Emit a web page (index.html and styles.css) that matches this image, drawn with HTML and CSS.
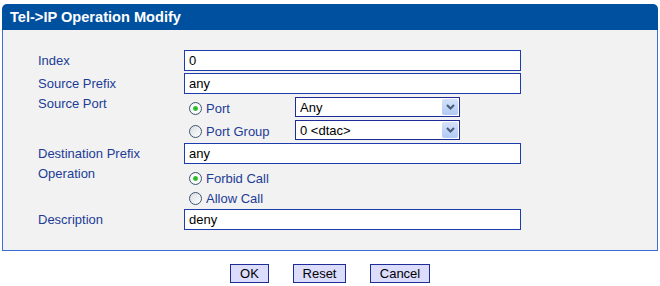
FILE: index.html
```html
<!DOCTYPE html>
<html lang="en">
<head>
    <meta charset="UTF-8">
    <title>Tel->IP Operation Modify</title>
    <link rel="stylesheet" href="styles.css">
</head>
<body>

    <div class="box">
        <div class="title">Tel-&gt;IP Operation Modify</div>
        <div class="panel">
            <div class="form">
                <div class="lbl">Index</div>
                <div class="val"><input class="txt" type="text" value="0"></div>

                <div class="lbl">Source Prefix</div>
                <div class="val"><input class="txt" type="text" value="any"></div>

                <div class="lbl top">Source Port</div>
                <div class="val sub">
                    <label class="opt"><input type="radio" name="port" checked> Port</label>
                    <div class="sel">
                        <select><option>Any</option></select>
                        <span class="arrow"><svg width="9" height="6" viewBox="0 0 9 6"><path d="M1 1 L4.5 4.5 L8 1" fill="none" stroke="#4a5a78" stroke-width="2"/></svg></span>
                    </div>
                    <label class="opt"><input type="radio" name="port"> Port Group</label>
                    <div class="sel">
                        <select><option>0 &lt;dtac&gt;</option></select>
                        <span class="arrow"><svg width="9" height="6" viewBox="0 0 9 6"><path d="M1 1 L4.5 4.5 L8 1" fill="none" stroke="#4a5a78" stroke-width="2"/></svg></span>
                    </div>
                </div>

                <div class="lbl">Destination Prefix</div>
                <div class="val"><input class="txt" type="text" value="any"></div>

                <div class="lbl top">Operation</div>
                <div class="val ops">
                    <label class="opt"><input type="radio" name="op" checked> Forbid Call</label>
                    <label class="opt"><input type="radio" name="op"> Allow Call</label>
                </div>

                <div class="lbl">Description</div>
                <div class="val"><input class="txt" type="text" value="deny"></div>
            </div>
        </div>

        <div class="actions">
            <button class="btn ok">OK</button>
            <button class="btn reset">Reset</button>
            <button class="btn cancel">Cancel</button>
        </div>
    </div>

</body>
</html>
```

FILE: styles.css
```css
body {
    font-family: Arial, "Liberation Sans", sans-serif;
    background-color: #fff;
    margin: 0;
}

.box {
    margin: 4px 2px 0 2px;
}

.title {
    background-color: #0050a0;
    color: #fff;
    font-size: 14.6px;
    font-weight: bold;
    height: 26px;
    line-height: 26px;
    padding-left: 8px;
    border-radius: 5px 5px 0 0;
}

.panel {
    background-color: #f2f2f2;
    border: 1px solid #3a6ed6;
    border-top: none;
    padding: 20px 0 20px 35px;
}

.form {
    display: grid;
    grid-template-columns: 146px 337px;
    row-gap: 2px;
}

.lbl {
    font-size: 13px;
    color: #1c3c96;
    line-height: 21px;
}

.lbl.top {
    line-height: 16px;
}

.txt {
    box-sizing: border-box;
    width: 337px;
    height: 21px;
    border: 1px solid #1d3cae;
    background: #fff;
    padding: 0 4px;
    margin: 0;
    font-family: Arial, "Liberation Sans", sans-serif;
    font-size: 13px;
    color: #000;
    display: block;
}

.sub {
    display: grid;
    grid-template-columns: 111px 165px;
    grid-auto-rows: 21px;
    row-gap: 2px;
    margin-bottom: 1px;
}

.ops {
    display: grid;
    grid-template-rows: 21px 20px;
}

.opt {
    display: flex;
    align-items: center;
    gap: 4px;
    font-size: 13px;
    color: #1c3c96;
    padding-left: 5px;
    padding-top: 3px;
}

.opt input {
    appearance: none;
    -webkit-appearance: none;
    width: 13px;
    height: 13px;
    margin: 0;
    border: 1px solid #3d5670;
    border-radius: 50%;
    background: linear-gradient(135deg, #d8dde2, #ffffff);
    box-sizing: border-box;
}

.opt input:checked {
    background: radial-gradient(circle, #22b022 0, #3cc43c 2px, #ffffff 3px, #e6e9ec 100%);
}

.sel {
    position: relative;
    width: 165px;
    height: 20px;
    margin-top: 1px;
}

.sel select {
    appearance: none;
    -webkit-appearance: none;
    box-sizing: border-box;
    width: 165px;
    height: 20px;
    border: 1px solid #1d2c96;
    border-radius: 0;
    background: #fff;
    padding: 0 4px;
    font-family: Arial, "Liberation Sans", sans-serif;
    font-size: 13px;
    color: #000;
}

.arrow {
    position: absolute;
    top: 2px;
    right: 2px;
    width: 16px;
    height: 16px;
    background: linear-gradient(#d4e2fa, #b2c9f3);
    border-radius: 2px;
    display: flex;
    align-items: center;
    justify-content: center;
    pointer-events: none;
}

.actions {
    display: flex;
    justify-content: center;
    gap: 24px;
    margin-top: 13px;
}

.btn {
    height: 19px;
    padding: 0;
    border: 1px solid #1d2c96;
    background-color: #dcdcfc;
    font-family: Arial, "Liberation Sans", sans-serif;
    font-size: 13px;
    color: #000;
    cursor: pointer;
}

.ok { width: 39px; }
.reset { width: 53px; }
.cancel { width: 60px; }
```
